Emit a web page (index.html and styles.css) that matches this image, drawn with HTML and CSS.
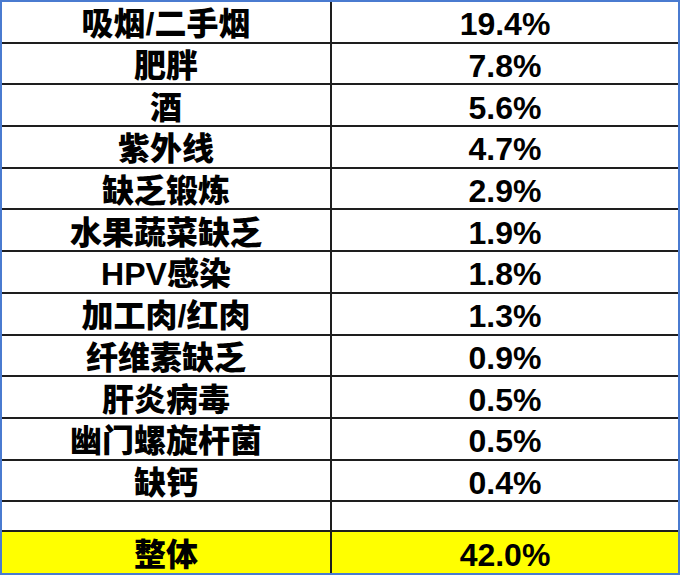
FILE: index.html
```html
<!DOCTYPE html>
<html lang="zh">
<head>
<meta charset="utf-8">
<link rel="stylesheet" href="styles.css">
</head>
<body>
<div class="sheet">
  <div class="row"><div class="cell name">吸烟/二手烟</div><div class="cell val">19.4%</div></div>
  <div class="row"><div class="cell name">肥胖</div><div class="cell val">7.8%</div></div>
  <div class="row"><div class="cell name">酒</div><div class="cell val">5.6%</div></div>
  <div class="row"><div class="cell name">紫外线</div><div class="cell val">4.7%</div></div>
  <div class="row"><div class="cell name">缺乏锻炼</div><div class="cell val">2.9%</div></div>
  <div class="row"><div class="cell name">水果蔬菜缺乏</div><div class="cell val">1.9%</div></div>
  <div class="row"><div class="cell name">HPV感染</div><div class="cell val">1.8%</div></div>
  <div class="row"><div class="cell name">加工肉/红肉</div><div class="cell val">1.3%</div></div>
  <div class="row"><div class="cell name">纤维素缺乏</div><div class="cell val">0.9%</div></div>
  <div class="row"><div class="cell name">肝炎病毒</div><div class="cell val">0.5%</div></div>
  <div class="row"><div class="cell name">幽门螺旋杆菌</div><div class="cell val">0.5%</div></div>
  <div class="row"><div class="cell name">缺钙</div><div class="cell val">0.4%</div></div>
  <div class="row blank"><div class="cell name"></div><div class="cell val"></div></div>
  <div class="row total"><div class="cell name">整体</div><div class="cell val">42.0%</div></div>
</div>
</body>
</html>
```
FILE: styles.css
```css
html, body {
  margin: 0;
  padding: 0;
  background: #ffffff;
}
.sheet {
  box-sizing: border-box;
  width: 680px;
  height: 575px;
  border: 2px solid #4a7bd0;
  display: flex;
  flex-direction: column;
  font-family: "Liberation Sans", "Noto Sans CJK SC", sans-serif;
  font-weight: 900;
  font-size: 32px;
  color: #000;
}
.row {
  box-sizing: border-box;
  height: 41.7px;
  display: flex;
  border-bottom: 2px solid #1e1e1e;
}
.row.blank {
  height: 29.6px;
}
.row.total {
  flex: 1;
  height: auto;
  border-bottom: none;
  background: #ffff00;
}
.cell {
  display: flex;
  align-items: center;
  justify-content: center;
  padding-top: 5px;
  line-height: 1;
  white-space: nowrap;
}
.name {
  box-sizing: border-box;
  width: 330px;
  border-right: 2px solid #1e1e1e;
}
.val {
  flex: 1;
}
```
